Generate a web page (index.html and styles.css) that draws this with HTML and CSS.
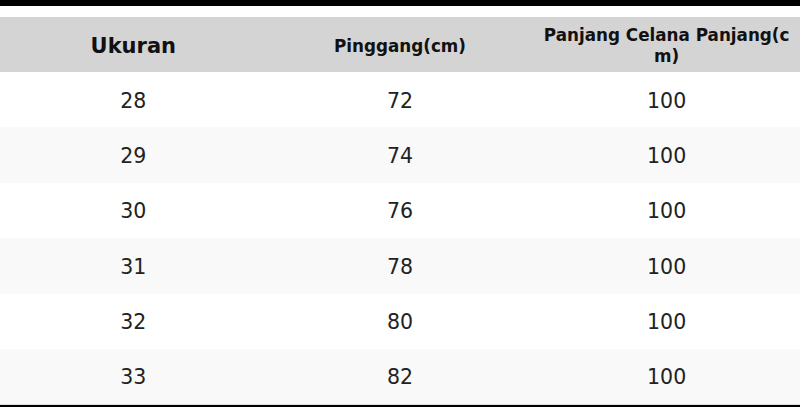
FILE: index.html
```html
<!DOCTYPE html>
<html lang="id">
<head>
<meta charset="utf-8">
<title>Ukuran</title>
<link rel="stylesheet" href="styles.css">
</head>
<body>
<div class="topbar"></div>
<table class="size-table">
  <thead>
    <tr>
      <th class="th-big">Ukuran</th>
      <th>Pinggang(cm)</th>
      <th>Panjang Celana Panjang(cm)</th>
    </tr>
  </thead>
  <tbody>
    <tr><td>28</td><td>72</td><td>100</td></tr>
    <tr><td>29</td><td>74</td><td>100</td></tr>
    <tr><td>30</td><td>76</td><td>100</td></tr>
    <tr><td>31</td><td>78</td><td>100</td></tr>
    <tr><td>32</td><td>80</td><td>100</td></tr>
    <tr><td>33</td><td>82</td><td>100</td></tr>
  </tbody>
</table>
<div class="bottombar"></div>
</body>
</html>
```
FILE: styles.css
```css
html, body {
  margin: 0;
  padding: 0;
  background: #ffffff;
}
body {
  width: 800px;
  height: 407px;
  overflow: hidden;
  font-family: "DejaVu Sans", "Liberation Sans", sans-serif;
}
.topbar {
  height: 6px;
  background: #000000;
}
.size-table {
  margin-top: 11px;
  width: 800px;
  border-collapse: collapse;
  table-layout: fixed;
}
.size-table th {
  height: 55px;
  box-sizing: border-box;
  padding: 3px 8px 0;
  background: #d4d4d4;
  color: #111111;
  font-weight: bold;
  font-size: 16.8px;
  line-height: 21px;
  text-align: center;
  vertical-align: middle;
  word-break: break-all;
}
.size-table th.th-big {
  font-size: 21px;
}
.size-table td {
  height: 55.4px;
  box-sizing: border-box;
  padding: 2px 8px 0;
  text-align: center;
  vertical-align: middle;
  font-size: 20.5px;
  color: #222222;
}
.size-table tbody tr:nth-child(even) td {
  background: #f9f9f9;
}
.size-table tbody tr:last-child td {
  border-bottom: 1px solid #dddddd;
}
.bottombar {
  height: 4px;
  background: #000000;
}
```
